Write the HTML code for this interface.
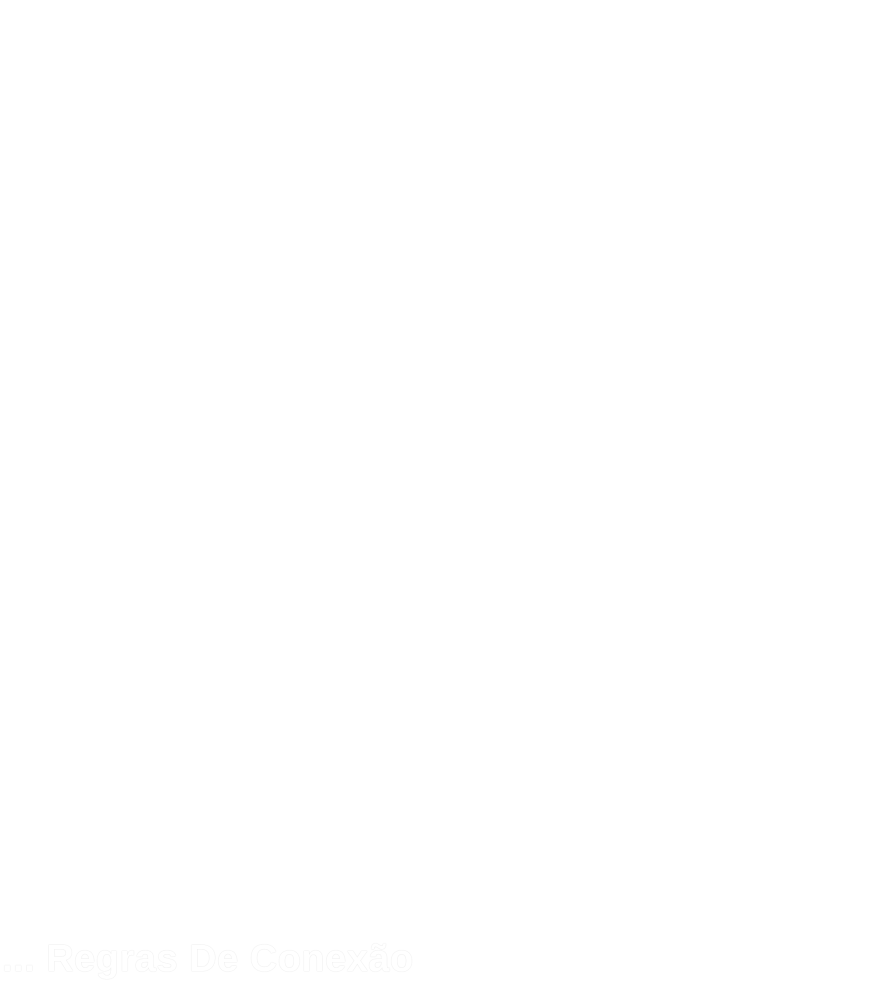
<!DOCTYPE html>
<html><head><meta charset="utf-8"><style>
html,body{margin:0;padding:0;background:#fff;width:892px;height:1000px;overflow:hidden}
.t{position:absolute;left:2px;top:938px;font-family:"Liberation Sans",sans-serif;font-weight:bold;font-size:38px;color:#fff;white-space:nowrap;
text-shadow:0 0 1px #e4e4e4,0 0 1px #e4e4e4;letter-spacing:0.5px}
</style></head><body>
<div class="t">... Regras De Conexão</div>
</body></html>
